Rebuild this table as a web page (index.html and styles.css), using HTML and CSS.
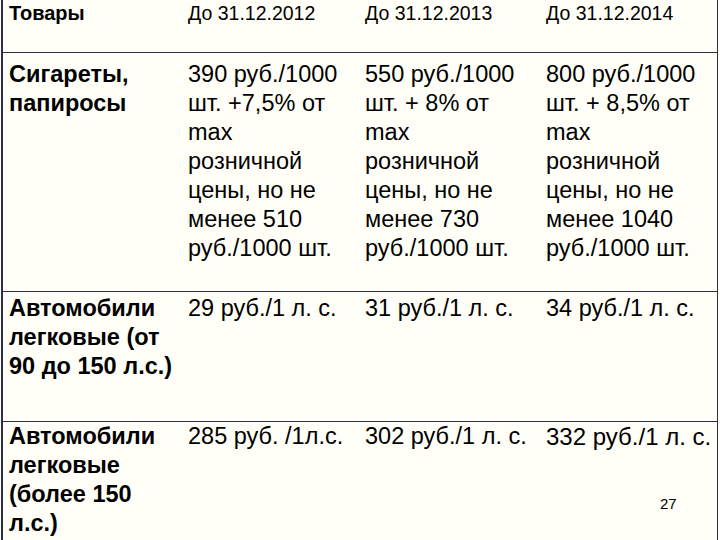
FILE: index.html
```html
<!DOCTYPE html>
<html lang="ru">
<head>
<meta charset="utf-8">
<title>Акцизы</title>
<link rel="stylesheet" href="styles.css">
</head>
<body>
<div class="slide">
  <table class="rates">
    <colgroup>
      <col class="c1"><col class="c2"><col class="c3"><col class="c4">
    </colgroup>
    <tr class="row-head">
      <th>Товары</th>
      <th>До 31.12.2012</th>
      <th>До 31.12.2013</th>
      <th>До 31.12.2014</th>
    </tr>
    <tr class="row-cig">
      <td class="name">Сигареты,<br>папиросы</td>
      <td>390 руб./1000<br>шт. +7,5% от<br>max<br>розничной<br>цены, но не<br>менее 510<br>руб./1000 шт.</td>
      <td>550 руб./1000<br>шт. + 8% от<br>max<br>розничной<br>цены, но не<br>менее 730<br>руб./1000 шт.</td>
      <td>800 руб./1000<br>шт. + 8,5% от<br>max<br>розничной<br>цены, но не<br>менее 1040<br>руб./1000 шт.</td>
    </tr>
    <tr class="row-car1">
      <td class="name">Автомобили<br>легковые (от<br>90 до 150 л.с.)</td>
      <td>29 руб./1 л. с.</td>
      <td>31 руб./1 л. с.</td>
      <td>34 руб./1 л. с.</td>
    </tr>
    <tr class="row-car2">
      <td class="name">Автомобили<br>легковые<br>(более 150<br>л.с.)</td>
      <td>285 руб. /1л.с.</td>
      <td>302 руб./1 л. с.</td>
      <td class="wide">332 руб./1 л. с.</td>
    </tr>
  </table>
  <div class="page-num">27</div>
</div>
</body>
</html>
```
FILE: styles.css
```css
html, body {
  margin: 0;
  padding: 0;
  background: #fffff8;
}

.slide {
  position: relative;
  width: 720px;
  height: 540px;
  overflow: hidden;
  font-family: "Liberation Sans", Arial, sans-serif;
  color: #000;
}

.rates {
  margin-left: 1px;
  width: 717px;
  border-collapse: collapse;
  table-layout: fixed;
  border-left: 2px solid #2e2e4c;
  border-right: 1px solid #2e2e4c;
}

.c1 { width: 180px; }
.c2 { width: 177px; }
.c3 { width: 181px; }

.rates th,
.rates td {
  text-align: left;
  vertical-align: top;
  white-space: nowrap;
  padding: 0 0 0 6px;
  font-weight: normal;
}

.rates tr {
  border-bottom: 1px solid #2e2e4c;
}

.row-head th {
  height: 50px;
  font-size: 19.5px;
  line-height: 22px;
  padding-top: 2px;
}

.row-head th:first-child {
  font-weight: bold;
  font-size: 20px;
}

.rates td {
  font-size: 23.5px;
  line-height: 29px;
}

.rates td.name {
  font-weight: bold;
  font-size: 23.5px;
}

.rates td.wide {
  font-size: 24px;
}

.row-cig td {
  height: 231px;
  padding-top: 7px;
}

.row-car1 td {
  height: 127px;
  padding-top: 2px;
}

.row-car2 {
  border-bottom: none;
}

.row-car2 td {
  height: 118px;
  padding-top: 0;
}

.page-num {
  position: absolute;
  left: 660px;
  top: 495px;
  font-size: 15px;
  line-height: 18px;
}
```
